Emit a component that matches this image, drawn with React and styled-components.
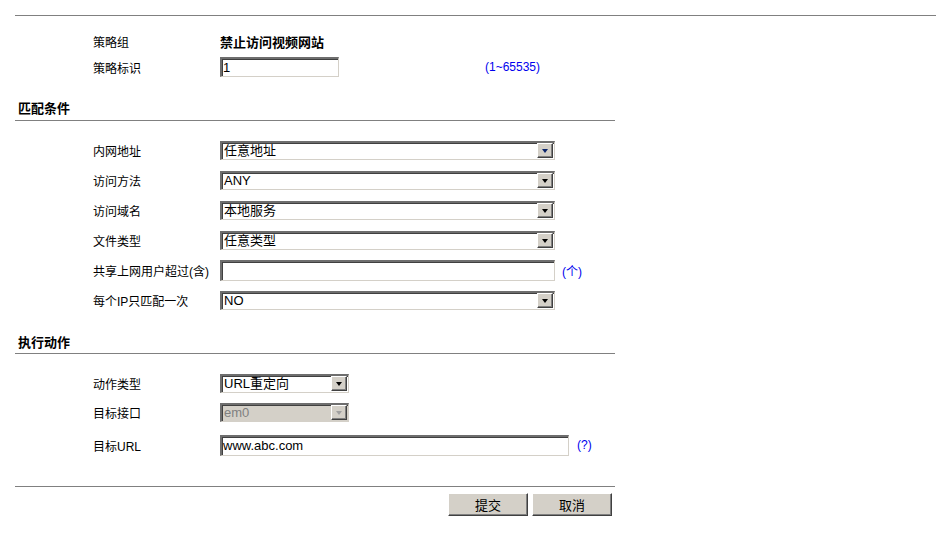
import React from "react";
import styled, { createGlobalStyle } from "styled-components";

const Global = createGlobalStyle`
  html, body { margin: 0; padding: 0; background: #fff; }
  body {
    font-family: "Liberation Sans", "Noto Sans CJK SC", sans-serif;
    font-size: 12px;
    color: #000;
  }
`;

const Page = styled.div`
  padding: 15px 0 0 15px;
  width: 921px;
`;

const TopRule = styled.div`
  border-top: 1px solid #808080;
`;

const Panel = styled.div`
  width: 600px;
`;

const InfoBlock = styled.div`
  padding-top: 12px;
`;

const Row = styled.div`
  display: grid;
  grid-template-columns: 78px 127px auto auto;
  align-items: center;
  height: ${(p) => p.$h || 30}px;
`;

const Label = styled.div`
  grid-column: 2;
  white-space: nowrap;
`;

const Value = styled.div`
  grid-column: 3;
  font-weight: bold;
  font-size: 13px;
`;

const Hint = styled.span`
  color: #0000ee;
  margin-left: ${(p) => p.$ml || 8}px;
  white-space: nowrap;
`;

const SectionHead = styled.div`
  margin-top: ${(p) => p.$mt || 0}px;
  padding: 0 0 ${(p) => p.$pb || 4}px 3px;
  font-weight: bold;
  font-size: 13px;
  border-bottom: 1px solid #808080;
  line-height: 14px;
`;

const Rows = styled.div`
  padding-top: ${(p) => p.$pt || 15}px;
`;

const Control = styled.div`
  grid-column: 3;
  display: flex;
  align-items: center;
`;

const TextBox = styled.div`
  box-sizing: border-box;
  width: ${(p) => p.$w}px;
  height: ${(p) => p.$h || 21}px;
  border-top: 2px solid #6e6e6e;
  border-left: 2px solid #6e6e6e;
  border-right: 1px solid #d4d0c8;
  border-bottom: 1px solid #d4d0c8;
  box-shadow: inset 1px 1px 0 #404040;
  background: #fff;
  padding: 0 0 0 1px;
  display: flex;
  align-items: center;
  font-size: 13px;
  line-height: 14px;
`;

const SelectBox = styled.div`
  box-sizing: border-box;
  width: ${(p) => p.$w}px;
  height: 19px;
  border-top: 2px solid #6e6e6e;
  border-left: 2px solid #6e6e6e;
  border-right: 1px solid #d4d0c8;
  border-bottom: 1px solid #d4d0c8;
  box-shadow: inset 1px 1px 0 #404040;
  background: ${(p) => (p.$disabled ? "#d4d0c8" : "#fff")};
  color: ${(p) => (p.$disabled ? "#808080" : "#000")};
  display: flex;
  align-items: stretch;
`;

const SelectText = styled.div`
  flex: 1;
  padding-left: 2px;
  display: flex;
  align-items: center;
  font-size: 13px;
  line-height: 14px;
`;

const ArrowBtn = styled.div`
  box-sizing: border-box;
  width: 16px;
  margin: 0 1px 1px 0;
  background: #d4d0c8;
  border-top: 1px solid #fff;
  border-left: 1px solid #fff;
  border-right: 1px solid #404040;
  border-bottom: 1px solid #404040;
  box-shadow: inset -1px -1px 0 #808080;
  display: flex;
  align-items: center;
  justify-content: center;
`;

const Triangle = styled.div`
  width: 0;
  height: 0;
  border-left: 3.5px solid transparent;
  border-right: 3.5px solid transparent;
  border-top: 4px solid ${(p) => p.$color || "#000"};
  margin-top: 1px;
`;

const Footer = styled.div`
  margin-top: ${(p) => p.$mt || 0}px;
  border-top: 1px solid #808080;
  display: flex;
  justify-content: flex-end;
  gap: 4px;
  padding: 6px 3px 0 0;
`;

const Button = styled.div`
  box-sizing: border-box;
  width: 80px;
  height: 23px;
  background: #d4d0c8;
  border-top: 1px solid #fff;
  border-left: 1px solid #fff;
  border-right: 1px solid #404040;
  border-bottom: 1px solid #404040;
  box-shadow: inset -1px -1px 0 #808080;
  display: flex;
  align-items: center;
  justify-content: center;
  font-size: 13px;
  font-family: "Noto Sans CJK SC", sans-serif;
`;

function Select({ w, value, arrow, disabled }) {
  return (
    <SelectBox $w={w} $disabled={disabled}>
      <SelectText>{value}</SelectText>
      <ArrowBtn>
        <Triangle $color={disabled ? "#a0a0a0" : arrow} />
      </ArrowBtn>
    </SelectBox>
  );
}

export default function App() {
  return (
    <>
      <Global />
      <Page>
        <TopRule />
        <Panel>
          <InfoBlock>
            <Row $h={26}>
              <Label>策略组</Label>
              <Value>禁止访问视频网站</Value>
            </Row>
            <Row $h={26}>
              <Label>策略标识</Label>
              <Control>
                <TextBox $w={119} $h={20}>1</TextBox>
                <Hint $ml={146}>(1~65535)</Hint>
              </Control>
            </Row>
          </InfoBlock>
          <SectionHead $mt={22} $pb={4}>匹配条件</SectionHead>
          <Rows $pt={14}>
            <Row>
              <Label>内网地址</Label>
              <Control>
                <Select w={335} value="任意地址" arrow="#0a246a" />
              </Control>
            </Row>
            <Row>
              <Label>访问方法</Label>
              <Control>
                <Select w={335} value="ANY" />
              </Control>
            </Row>
            <Row>
              <Label>访问域名</Label>
              <Control>
                <Select w={335} value="本地服务" />
              </Control>
            </Row>
            <Row>
              <Label>文件类型</Label>
              <Control>
                <Select w={335} value="任意类型" />
              </Control>
            </Row>
            <Row>
              <Label>共享上网用户超过(含)</Label>
              <Control>
                <TextBox $w={335} $h={21} />
                <Hint $ml={7}>(个)</Hint>
              </Control>
            </Row>
            <Row>
              <Label>每个IP只匹配一次</Label>
              <Control>
                <Select w={335} value="NO" />
              </Control>
            </Row>
          </Rows>
          <SectionHead $mt={21} $pb={3}>执行动作</SectionHead>
          <Rows $pt={14}>
            <Row $h={30}>
              <Label>动作类型</Label>
              <Control>
                <Select w={129} value="URL重定向" />
              </Control>
            </Row>
            <Row $h={28}>
              <Label>目标接口</Label>
              <Control>
                <Select w={129} value="em0" disabled />
              </Control>
            </Row>
            <Row $h={38}>
              <Label>目标URL</Label>
              <Control>
                <TextBox $w={349} $h={21}>www.abc.com</TextBox>
                <Hint $ml={8}>(?)</Hint>
              </Control>
            </Row>
          </Rows>
          <Footer $mt={22}>
            <Button>提交</Button>
            <Button>取消</Button>
          </Footer>
        </Panel>
      </Page>
    </>
  );
}
